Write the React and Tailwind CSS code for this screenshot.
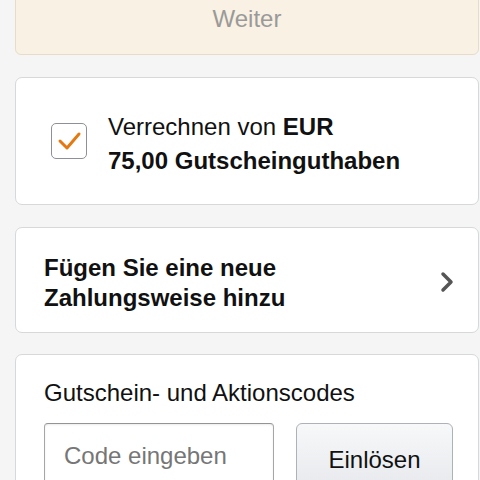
import { useState } from "react";

function CheckBox({ checked }) {
  return (
    <div className="w-[36px] h-[36px] shrink-0 rounded-[5px] border border-[#8d9096] bg-white flex items-center justify-center">
      {checked && (
        <svg width="26" height="22" viewBox="0 0 26 22" fill="none">
          <polyline
            points="4,11 11,18 23,4"
            stroke="#e47911"
            strokeWidth="3"
            strokeLinecap="round"
            strokeLinejoin="round"
          />
        </svg>
      )}
    </div>
  );
}

export default function App() {
  const [useBalance, setUseBalance] = useState(true);
  const [code, setCode] = useState("");

  return (
    <div
      className="min-h-[480px] h-[480px] overflow-hidden bg-[#f5f5f5] pl-[15px] pr-px text-[#111] text-[24px]"
      style={{ fontFamily: '"Liberation Sans", Arial, sans-serif' }}
    >
      <div className="flex flex-col gap-[22px]">
        {/* Continue button (disabled) */}
        <button className="-mt-[18px] h-[73px] w-[464px] rounded-[6px] border border-[#e6dcc8] bg-[#f9f1e3] text-[#9a9a9a] text-[24px]">
          Weiter
        </button>

        {/* Gift card balance */}
        <div
          onClick={() => setUseBalance((v) => !v)}
          className="w-[464px] h-[128px] rounded-[7px] border border-[#d5d9d9] bg-white flex items-start pl-[35px] pt-[32px]"
        >
          <div className="mt-[13px]">
            <CheckBox checked={useBalance} />
          </div>
          <div className="ml-[21px] leading-[34px]">
            Verrechnen von <span className="font-bold">EUR</span>
            <br />
            <span className="font-bold">75,00 Gutscheinguthaben</span>
          </div>
        </div>

        {/* Add payment method */}
        <div className="w-[464px] h-[106px] rounded-[7px] border border-[#d5d9d9] bg-white flex items-center justify-between pl-[28px] pr-[24px]">
          <div className="font-bold leading-[30px] pt-[5px]">
            Fügen Sie eine neue
            <br />
            Zahlungsweise hinzu
          </div>
          <svg width="14" height="22" viewBox="0 0 14 22" fill="none" className="mt-[4px]">
            <polyline
              points="3,3 11,11 3,19"
              stroke="#555"
              strokeWidth="3.5"
              strokeLinecap="round"
              strokeLinejoin="round"
            />
          </svg>
        </div>

        {/* Promo codes */}
        <div className="-mt-px w-[464px] rounded-[7px] border border-[#d5d9d9] bg-white pl-[28px] pt-[23px] pb-[20px]">
          <div className="leading-[30px]">Gutschein- und Aktionscodes</div>
          <div className="mt-[15px] flex gap-[22px]">
            <input
              value={code}
              onChange={(e) => setCode(e.target.value)}
              placeholder="Code eingeben"
              className="w-[230px] h-[66px] rounded-[4px] border border-[#a6a6a6] border-t-[#949494] bg-white px-[19px] text-[24px] text-[#111] placeholder:text-[#767676] outline-none shadow-[inset_0_1px_2px_rgba(0,0,0,0.08)]"
            />
            <button className="w-[157px] h-[66px] rounded-[6px] border border-[#adb1b8] bg-gradient-to-b from-[#f7f8fa] to-[#e7e9ec] text-[24px] text-[#111] pt-[8px]">
              Einlösen
            </button>
          </div>
        </div>
      </div>
    </div>
  );
}
